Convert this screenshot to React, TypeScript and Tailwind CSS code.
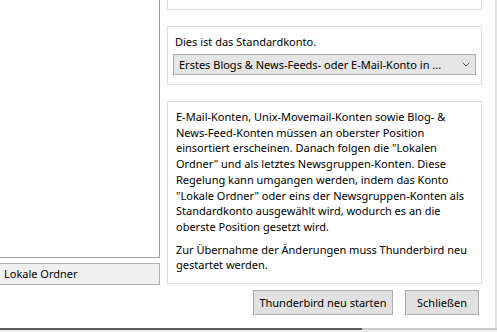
import React from "react";

export default function App() {
  const font = { fontFamily: '"Noto Sans", "Liberation Sans", sans-serif' };
  return (
    <div
      className="relative w-[497px] h-[332px] overflow-hidden bg-white text-[11px] text-black flex flex-col"
      style={font}
    >
      <div className="flex flex-1">
        {/* left column */}
        <div className="w-[160px] flex flex-col">
          <div className="h-[258px] border-r border-b border-[#a0a0a0] bg-white" />
          <div className="mt-[5px] h-[22px] border-y border-r border-[#adadad] bg-[#f0f0f0] pl-[4px] leading-[20px] whitespace-nowrap">
            Lokale Ordner
          </div>
        </div>

        {/* right column */}
        <div className="w-[315px] ml-[7px] flex flex-col">
          <div className="h-[10px] border-x border-b border-[#dcdcdc]" />
          <div className="mt-[16px] h-[59px] border border-[#dcdcdc] px-[5px] pt-[7px]">
            <div className="pl-[2px] leading-[16px] whitespace-nowrap">Dies ist das Standardkonto.</div>
            <div className="mt-[4px] h-[21px] border border-[#acacac] bg-[#e5e5e5] flex items-center pl-[5px] pr-[5px]">
              <span className="flex-1 leading-[18px] whitespace-nowrap overflow-hidden">
                Erstes Blogs &amp; News-Feeds- oder E-Mail-Konto in ...
              </span>
              <svg width="8" height="5" viewBox="0 0 8 5" className="ml-[6px]">
                <path d="M0.5 0.5 L4 4 L7.5 0.5" fill="none" stroke="#606060" strokeWidth="1" />
              </svg>
            </div>
          </div>
          <div className="mt-[16px] h-[183px] border border-[#dcdcdc] pl-[8px] pr-[4px] pt-[7px] leading-[15.7px]">
            <p className="whitespace-nowrap">
              E-Mail-Konten, Unix-Movemail-Konten sowie Blog- &amp;
              <br />
              News-Feed-Konten müssen an oberster Position
              <br />
              einsortiert erscheinen. Danach folgen die "Lokalen
              <br />
              Ordner" und als letztes Newsgruppen-Konten. Diese
              <br />
              Regelung kann umgangen werden, indem das Konto
              <br />
              "Lokale Ordner" oder eins der Newsgruppen-Konten als
              <br />
              Standardkonto ausgewählt wird, wodurch es an die
              <br />
              oberste Position gesetzt wird.
            </p>
            <p className="mt-[7px] whitespace-nowrap">
              Zur Übernahme der Änderungen muss Thunderbird neu
              <br />
              gestartet werden.
            </p>
          </div>
          <div className="mt-[6px] flex justify-end gap-[12px] pr-[3px]">
            <button className="w-[140px] h-[25px] border border-[#adadad] bg-[#e1e1e1] leading-[22px] whitespace-nowrap">
              Thunderbird neu starten
            </button>
            <button className="w-[74px] h-[25px] border border-[#adadad] bg-[#e1e1e1] leading-[22px] whitespace-nowrap">
              Schließen
            </button>
          </div>
        </div>

        <div className="ml-[13px] w-[2px] bg-[#e3e3e3]" />
      </div>

      <div className="h-[2px] flex">
        <div className="w-[362px] bg-[#5a5a5a]" />
        <div className="flex-1 bg-[#c8c8c8]" />
      </div>
      <div className="h-[2px] bg-[#f0f0f0]" />
    </div>
  );
}
